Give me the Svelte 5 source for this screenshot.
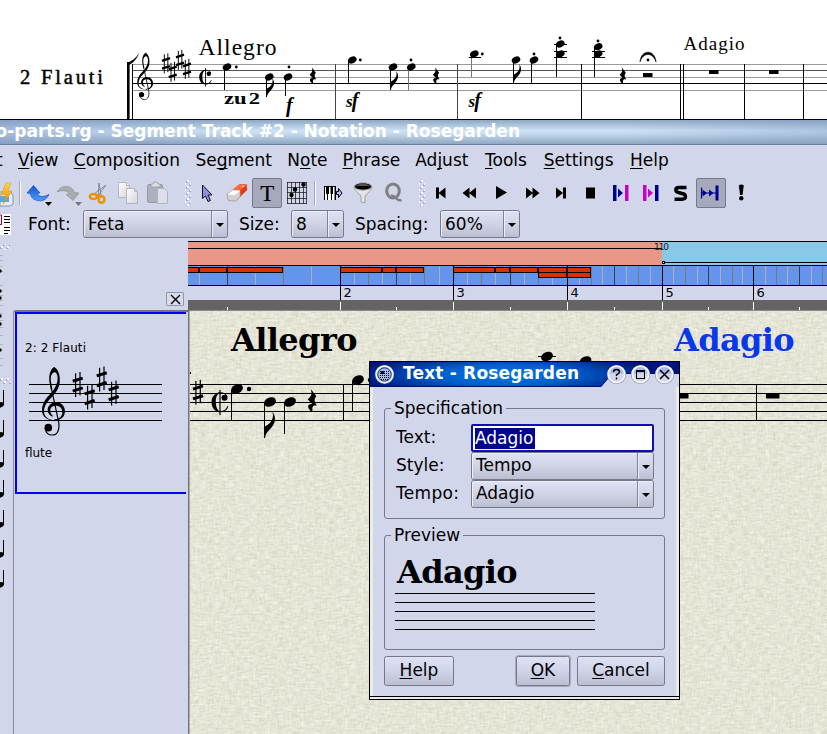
<script>
  const menus = [
    ['', 'V', 'iew', 40], ['', 'C', 'omposition', 106], ['Se', 'g', 'ment', 76],
    ['N', 'o', 'te', 39.5], ['', 'P', 'hrase', 57], ['Ad', 'j', 'ust', 54],
    ['', 'T', 'ools', 43], ['', 'S', 'ettings', 70.5], ['', 'H', 'elp', 40]
  ];
  const topLines = [[64.5, '#9a9a9a'], [70.5, '#555'], [77.5, '#9a9a9a'], [83.5, '#000'], [90.5, '#9a9a9a']];
  const staff = [384.5, 393.5, 402.5, 411.5, 420.5];
  const topSharps = [[166, 63.5], [172.7, 72], [180, 60], [187, 69]];
  const sharps = [[77.7, 384.7], [89.7, 397.3], [101.7, 379.3], [113.7, 393.3]];
  const topHeads = [
    [227, 67], [269.3, 77], [288, 77], [352.3, 60], [393, 67], [411.3, 67], [474.3, 54],
    [516, 60], [534, 60], [560.3, 44], [560.3, 54], [598.2, 46.7], [598.2, 54]
  ];
  const topDots = [
    [236.3, 67], [289, 67], [360.3, 60], [411, 60], [482.3, 54], [534, 54], [560, 38], [598, 41], [648, 60]
  ];
  const topStems = [
    [224.5, 68, 90], [266.5, 78, 97], [285.5, 78, 96], [348.5, 61, 83], [390.5, 68, 90], [408.5, 68, 90],
    [471.5, 55, 77], [513.5, 61, 83], [531.5, 61, 83], [556.5, 44, 77], [594.5, 47, 77]
  ];
  const topBars = [335.5, 457.5, 581.5, 680.5, 683.5, 744.5, 803.5];
  const ledgers = [[469, 481, 57.5], [554, 567, 44.5], [554, 567, 51.5], [554, 567, 57.5], [592, 605, 51.5], [592, 605, 57.5]];
  const ticks = [
    [199, 'l'], [227, 'd'], [255, 'l'], [283, 'm'], [311, 'l'], [354, 'l'], [368, 'm'], [382, 'l'], [396, 'd'],
    [410, 'l'], [424, 'm'], [439, 'l'], [467, 'l'], [481, 'm'], [495, 'l'], [510, 'd'], [524, 'l'], [538, 'm'],
    [552, 'l'], [579, 'l'], [591, 'm'], [602, 'l'], [614, 'd'], [626, 'l'], [638, 'm'], [650, 'l'], [673, 'l'],
    [685, 'm'], [697, 'l'], [708, 'd'], [720, 'l'], [732, 'm'], [742, 'l'], [765, 'l'], [776, 'm'], [787, 'l'],
    [799, 'd'], [811, 'l'], [822, 'm']
  ];
  const tone = { l: '#b0b0b4', m: '#787878', d: '#3c3c44' };
  const bars = [[340, 2], [453, 3], [567, 4], [662, 5], [753, 6]];
  const minor = [227, 396, 510, 614, 708, 799];
  const blocks = [
    [180, 199, 267], [199, 227, 267], [227, 283, 267], [340, 382, 267], [382, 396, 267], [396, 424, 267],
    [453, 495, 267], [495, 510, 267], [510, 538, 267], [538, 567, 267], [567, 591, 267],
    [538, 567, 272], [567, 591, 272]
  ];
  let text = $state('Adagio');
</script>

<svg width="0" height="0" class="defs">
  <defs>
    <g id="clef" transform="scale(.3333) translate(-160 -530)">
      <path d="M162 396 C174 400 182 422 179 444 C176 466 160 482 150 492 C138 504 132 516 132 530 C132 545 146 554 163 556 C144 558 126 546 126 526 C126 508 136 492 148 480 C160 468 173 450 173 430 C173 418 168 411 163 412 C155 414 151 425 153 440 L157 462 L153 464 C148 445 146 430 149 418 C152 405 157 399 162 396Z" />
      <path d="M163 557 C182 557 195 546 195 529 C195 514 184 502 168 502 C152 502 143 514 143 525 C143 535 150 542 158 545 L159 543 C152 538 151 532 151 526 C151 517 158 512 167 512 C178 512 187 518 187 531 C187 545 178 553 163 553Z" />
      <path d="M153 455 L176 560 C180 585 172 600 157 600 C146 600 138 592 136 582" fill="none" stroke="#000" stroke-width="3.5" />
      <circle cx="145" cy="578" r="11.5" />
    </g>
    <g id="sharp" fill="none" stroke="#000">
      <path d="M-2.1 -11.5V12.3M2.3 -12.7V10.8" stroke-width="1.2" />
      <path d="M-5 -3.4L5 -6.600M-5 6.4L5 3.2" stroke-width="3" />
    </g>
    <ellipse id="head" rx="6.2" ry="4.5" transform="rotate(-25)" />
    <path id="qrest" transform="scale(.3333)" d="M-4 -36 L13 -14 C6 -6 6 2 15 14 C6 12 -3 13 3 34 C-16 24 -16 6 1 9 L-13 -5 C-2 -14 1 -22 -4 -36Z" />
    <path id="flag" transform="scale(.3333)" d="M-1 0 V-34 C12 -40 31 -52 24 -79 C37 -60 32 -44 19 -29 C8 -17 3 -12 2 0Z" />
    <g id="cut">
      <path d="M7.500 4 C6 8 3 9.300 0 9 C-3 8.500 -4.200 4 -4.200 0 C-4.200 -5 -3 -8.500 0.500 -8.800 C3 -9 5.500 -8 6.500 -5.500 L7.500 -5.500 C6 -9 3 -10 0 -9.800 C-5 -9.300 -8.500 -5 -8.500 0 C-8.500 6 -5 10 0 10.200 C4.500 10 7.500 8 8.300 4Z" />
      <circle cx="4.5" cy="-4.3" r="3" />
      <path d="M0 -12V13" stroke="#000" stroke-width="1.2" />
    </g>
    <linearGradient id="gold" x2="0" y2="1"><stop stop-color="#ffd54a" /><stop offset="1" stop-color="#e58a00" /></linearGradient>
    <linearGradient id="blu" x2="0" y2="1"><stop stop-color="#1450c8" /><stop offset="1" stop-color="#4aa0ff" /></linearGradient>
    <linearGradient id="paper" x2="1" y2="1"><stop stop-color="#fff" /><stop offset="1" stop-color="#d4d4d8" /></linearGradient>
    <pattern id="grip" width="6" height="6" patternUnits="userSpaceOnUse">
      <path d="M0 1h2v2h-2zM3 4h2v2h-2z" fill="#a9aec6" /><path d="M1 0h2v2h-2zM4 3h2v2h-2z" fill="#f4f6ff" />
    </pattern>
  </defs>
</svg>

<div class="page">
  <svg class="score" width="827" height="120" viewBox="0 0 827 120">
    {#each topLines as [y, c]}<path d="M132 {y}H827" stroke={c} />{/each}
    <g font-family="'Liberation Serif', serif">
      <text x="20" y="84" font-size="20.500" stroke="#000" stroke-width=".45" textLength="83">2 Flauti</text>
      <text x="198.500" y="55" font-size="23.500" textLength="78">Allegro</text>
      <text x="683.500" y="50" font-size="19" textLength="61">Adagio</text>
      <text x="224" y="104" font-size="17" font-weight="bold" textLength="36" lengthAdjust="spacingAndGlyphs">zu<tspan dx="1.500">2</tspan></text>
      <g font-style="italic" font-weight="bold" font-size="20">
        <text x="286" y="112">f</text>
        <text x="346" y="107"><tspan font-size="17">s</tspan><tspan dx="-1">f</tspan></text>
        <text x="468.500" y="107"><tspan font-size="17">s</tspan><tspan dx="-1">f</tspan></text>
      </g>
    </g>
    <rect x="127" y="62" width="2.6" height="58" />
    <path d="M132.5 64V120" stroke="#000" />
    <path d="M127 63 C132 61 136 58 139 53 C137 59 133 63 129 65Z" />
    <use href="#clef" transform="translate(145 83.500) scale(.69)" />
    {#each topSharps as [x, y]}<use href="#sharp" transform="translate({x} {y}) scale(.8)" />{/each}
    <use href="#cut" transform="translate(205.500 77) scale(.74)" />
    {#each topBars as x}<path d="M{x} 64V120" stroke={x < 500 ? '#444' : '#000'} />{/each}
    {#each topStems as [x, a, b]}<path d="M{x} {a}V{b}" stroke={x === 408.5 || x === 471.5 ? '#777' : '#000'} />{/each}
    {#each topHeads as [x, y]}<use href="#head" transform="translate({x} {y}) scale(.72)" />{/each}
    {#each topDots as [x, y]}<circle cx={x} cy={y} r="1.4" />{/each}
    {#each ledgers as [a, b, y]}<path d="M{a} {y}H{b}" stroke="#000" />{/each}
    <use href="#flag" transform="translate(266.5 97) scale(.72)" />
    <use href="#flag" transform="translate(390.5 90) scale(.72)" />
    <use href="#flag" transform="translate(513.5 83) scale(.72)" />
    {#each [312.7, 436, 622.7] as x}<use href="#qrest" transform="translate({x} 76) scale(.72)" />{/each}
    <path d="M640 62 C641 49 655 49 656 62 C653 52 643 52 640 62Z" stroke="#000" stroke-width=".6" />
    <rect x="643" y="73" width="9.5" height="4" /><rect x="709" y="70" width="9.5" height="4" /><rect x="769" y="70" width="9.5" height="4" />
    <path d="M0 119.5H827" stroke="#000" />
  </svg>

  <div class="title"><span>o-parts.rg - Segment Track #2 - Notation - Rosegarden</span></div>

  <nav><span class="cutoff">t</span>
    {#each menus as [a, u, b, w]}<span class="menu" style="width:{w}px">{a}<u>{u}</u>{b}</span>{/each}
  </nav>

  <div class="tools">
    <svg width="26" height="32" viewBox="0 177 26 32">
      <path d="M0 192h11l2 4v8l-3 2H0z" fill="#e8ecf4" stroke="#8a93a8" /><path d="M0 196h9v6H0z" fill="#58a8e8" />
      <path d="M6 183h5l-3 8h4l-9 13 3-9H1z" fill="url(#gold)" stroke="#e09000" stroke-width=".5" />
      <path d="M19.500 181V205" stroke="#a0a4b8" /><path d="M20.500 181V205" stroke="#fff" />
    </svg>
    <svg width="28" height="32" viewBox="26 177 28 32">
      <path d="M27 193L33.500 185.500L40 193L37 193.500C39 197 43 197.500 49 194.500C46 200.500 41 201.500 38 200.500C34 200 31 198 30.500 193.500Z" fill="url(#blu)" stroke="#1a4cc0" stroke-width=".7" />
      <path d="M45 202h7l-3.500 4z" />
    </svg>
    <svg width="29" height="32" viewBox="54 177 29 32">
      <path d="M79 193L73 200.500L66 194.500L69.500 194C67 190 62 190 57 192C62 184 72 185 74.500 192.500Z" fill="#a9abb3" stroke="#8e9098" stroke-width=".7" />
      <path d="M75 202h7l-3.500 4z" fill="#777" />
    </svg>
    <svg width="30" height="32" viewBox="83 177 30 32">
      <path d="M99 183L101 195L98 197ZM106 185L97 197L94 194Z" fill="#d8dde8" stroke="#70788c" stroke-width=".8" />
      <ellipse cx="93.500" cy="196.500" rx="3.600" ry="2.500" fill="none" stroke="#e89400" stroke-width="2.500" />
      <ellipse cx="101.500" cy="199.500" rx="3" ry="3.300" fill="none" stroke="#e89400" stroke-width="2.500" />
      <path d="M96 195L101 196" stroke="#e89400" stroke-width="2.500" />
    </svg>
    <svg width="30" height="32" viewBox="113 177 30 32" stroke="#b4b6be" fill="url(#paper)">
      <path d="M118.500 182.500h8l3 3v12h-11z" /><path d="M126.500 188.500h8l3 3v12h-11z" /><path d="M126.500 182.500v3h3M134.500 188.500v3h3" />
    </svg>
    <svg width="29" height="32" viewBox="143 177 29 32">
      <rect x="147.500" y="184.500" width="15" height="18" rx="1.500" fill="#aeb1bd" stroke="#9699a8" />
      <path d="M151 187v-3h2l1-2h3l1 2h2v3z" fill="#ddd" stroke="#8e90a0" stroke-width=".7" />
      <path d="M157.500 188.500h7l3 3v12h-10z" fill="#dde0ec" stroke="#b0b3c2" />
    </svg>
    <svg width="20" height="32" viewBox="172 177 20 32"><rect x="185" y="180" width="6" height="26" fill="url(#grip)" /></svg>
    <svg width="30" height="32" viewBox="192 177 30 32">
      <path d="M202.500 185V198.500L205.500 196L208 201.500L210.500 200.500L208 195H212Z" fill="#8e90dc" stroke="#101030" />
    </svg>
    <svg width="30" height="32" viewBox="222 177 30 32">
      <path d="M227 194.500L239.500 184.500L246.500 184.500L247 190L235.500 201L228.500 200.500Z" fill="#e03c14" stroke="#c05030" stroke-width=".5" />
      <path d="M227 194.500L239.500 184.500L246.500 184.500L235 195Z" fill="#ff6a3c" />
      <path d="M227 194.500L232.500 190L240 190.500V196.500L235.500 201L228.500 200.500Z" fill="#d2d2d2" stroke="#a8a8a8" stroke-width=".6" />
      <path d="M227.300 194.500L232.500 190.300L240 190.700L235 195.200Z" fill="#fafafa" />
      <path d="M241.500 186L245 185.500L243 187.500Z" fill="#ffd8cc" />
    </svg>
    <svg width="30" height="32" viewBox="252 177 30 32">
      <rect x="252.500" y="178.500" width="29" height="29" rx="1.500" fill="#a6a9bc" stroke="#777988" />
      <text x="267.300" y="200.500" text-anchor="middle" font-family="'Liberation Serif', serif" font-size="23" stroke="#000" stroke-width=".2">T</text>
    </svg>
    <svg width="30" height="32" viewBox="282 177 30 32">
      <path d="M287.500 182V204M291.500 182V204M295.500 182V204M299.500 182V204M303.500 182V204M306.500 182V204M287 182.500H307M287 187.500H307M287 192.500H307M287 198.500H307M287 203.500H307" stroke="#222" stroke-width=".8" />
      <circle cx="303.500" cy="184.500" r="2.200" /><circle cx="295" cy="189.500" r="2.200" /><circle cx="291.500" cy="195" r="2.200" />
    </svg>
    <svg width="8" height="32" viewBox="312 177 8 32"><path d="M314.500 181V205" stroke="#a0a4b8" /><path d="M315.500 181V205" stroke="#fff" /></svg>
    <svg width="28" height="32" viewBox="320 177 28 32">
      <rect x="324" y="186" width="12" height="14" fill="#fff" />
      <path d="M324 186h12v1h-12zM324 186h1v14h-1zM326 186h3v8h-3zM330.500 186h2.500v8h-2.500zM334.500 186h1.500v14h-1.500zM327 194h1v6h-1zM331 194h1v6h-1z" />
      <path d="M336.500 191.500h2v-3l3.500 4.500l-3.500 4.500v-3h-2z" fill="#b4b8ff" stroke="#000" />
    </svg>
    <svg width="30" height="32" viewBox="348 177 30 32">
      <path d="M354 187C355 192 361 194 361 197V202L365 203V197C365 194 371 192 372 187Z" fill="#e4e4e4" stroke="#888" stroke-width=".7" />
      <ellipse cx="363" cy="186.500" rx="8.700" ry="3.700" fill="#000" stroke="#bbb" /><path d="M356 186C359 183 366 183 370 186Z" fill="#555" />
    </svg>
    <svg width="30" height="32" viewBox="378 177 30 32">
      <ellipse cx="393" cy="191" rx="6.300" ry="7" fill="none" stroke="#808080" stroke-width="3" /><path d="M391 195.500C396 195 396 202 401.500 200" fill="none" stroke="#808080" stroke-width="2.400" />
    </svg>
    <svg width="19" height="32" viewBox="408 177 19 32"><rect x="419" y="180" width="6" height="26" fill="url(#grip)" /></svg>
    <svg width="29" height="32" viewBox="427 177 29 32"><path d="M436 187.500h3v11h-3zM445.500 187.500v11l-7-5.500z" /></svg>
    <svg width="30" height="32" viewBox="456 177 30 32"><path d="M469.500 187.500v11l-7-5.500zM476 187.500v11l-7-5.500z" /></svg>
    <svg width="30" height="32" viewBox="486 177 30 32"><path d="M496 186l11 6.500l-11 6.500z" /></svg>
    <svg width="30" height="32" viewBox="516 177 30 32"><path d="M526 187.500v11l7-5.500zM532.500 187.500v11l7-5.500z" /></svg>
    <svg width="29" height="32" viewBox="546 177 29 32"><path d="M556 187.500v11l7-5.500zM563 187.500h3v11h-3z" /></svg>
    <svg width="30" height="32" viewBox="575 177 30 32"><path d="M586 187.500h9v11h-9z" /></svg>
    <svg width="31" height="32" viewBox="605 177 31 32"><path d="M613 185h3.500v16h-3.500zM618 188.500v9l5-4.500z" fill="#000090" /><path d="M625 185h3.500v16h-3.500z" fill="#c800c8" /></svg>
    <svg width="30" height="32" viewBox="636 177 30 32"><path d="M643 185h3.500v16h-3.500zM648 188.500v9l5-4.500z" fill="#c800c8" /><path d="M655 185h3.500v16h-3.500z" fill="#000090" /></svg>
    <svg width="30" height="32" viewBox="666 177 30 32"><path d="M686.500 187.500H679Q675.800 187.500 675.800 190Q675.800 192 678.500 192.500L682 193.500Q685.500 194 685.500 196.500Q685.500 199.200 682 199.200H674.500" fill="none" stroke="#000" stroke-width="3.400" /></svg>
    <svg width="30" height="32" viewBox="696 177 30 32">
      <rect x="696.500" y="178.500" width="29" height="29" rx="1.500" fill="#a6a9bc" stroke="#777988" />
      <path d="M701 193H716M701.500 187.500v11" stroke="#000090" stroke-width="1.200" /><path d="M702.500 189.500v7l4.500-3.500zM709 189.500v7l4.500-3.500zM715.500 185.500h3v15h-3z" fill="#000090" />
    </svg>
    <svg width="30" height="32" viewBox="726 177 30 32"><path d="M738.800 185.500Q741.300 183.500 743.800 185.500L742.500 195h-2.400z" /><circle cx="741.300" cy="198.300" r="2.200" /></svg>
  </div>

  <div class="tools2">
    <svg width="28" height="30" viewBox="0 210 28 30">
      <rect y="214" width="11" height="21" fill="#fff" /><path d="M0 215H1.500V224.500H0" fill="none" stroke="#a00028" />
      <path d="M4 216.500h6M4 219.500h6M4 222.500h6M4 227.500h6M4 230.500h6M4 233.500h4" stroke="#000" stroke-width="1.200" />
    </svg>
    <span style="width:55px">Font:</span><div class="combo" style="width:145px"><b>Feta</b><i></i></div>
    <span class="gap" style="width:52px">Size:</span><div class="combo" style="width:53px"><b>8</b><i></i></div>
    <span class="gap" style="width:85px">Spacing:</span><div class="combo" style="width:80px"><b>60%</b><i></i></div>
  </div>

  <div class="body">
    <svg class="strip" width="13" height="493" viewBox="0 241 13 493">
      <rect y="244" width="11" height="6" fill="url(#grip)" /><rect y="378" width="11" height="6" fill="url(#grip)" />
      {#each [255, 260, 266, 271, 285, 290, 295, 300, 305, 313, 320, 327, 335, 344, 350, 358, 365] as y}<path d="M0 {y}.5H3" stroke="#b4b4b0" />{/each}
      {#each [271, 291, 298, 316, 324, 350] as y}<circle cx="0" cy={y} r="1.700" />{/each}
      {#each [405, 435, 465, 495, 525, 555, 585] as y}<path d="M3.500 {y - 15}V{y}" stroke="#000" /><ellipse cx="0" cy={y} rx="4" ry="2.600" transform="rotate(-18 0 {y})" />{/each}
    </svg>
    <aside>
      <div class="top"><button aria-label="Close"><svg width="11" height="11" viewBox="0 0 11 11"><path d="M1 1L10 10M10 1L1 10" stroke="#000" stroke-width="1.400" /></svg></button></div>
      <div class="panel">
        <svg class="track" width="171" height="182" viewBox="15 312 171 182">
          <path d="M186 313H16V493H186" fill="none" stroke="#0000ff" stroke-width="2" />
          {#each staff as y}<path d="M29 {y}H162" stroke="#000" />{/each}
          <use href="#clef" transform="translate(53.300 411.700)" />
          {#each sharps as [x, y]}<use href="#sharp" transform="translate({x} {y})" />{/each}
          <g font-family="'DejaVu Sans', sans-serif" font-size="12"><text x="25" y="352" textLength="61">2: 2 Flauti</text><text x="25" y="457" textLength="27">flute</text></g>
        </svg>
      </div>
    </aside>
    <svg class="canvas" width="639" height="493" viewBox="188 241 639 493">
      <defs>
        <filter id="weft" x="0" y="0" width="1" height="1" color-interpolation-filters="sRGB">
          <feTurbulence type="fractalNoise" baseFrequency=".14 .5" numOctaves="2" seed="4" />
          <feColorMatrix values=".22 0 0 0 .79  .22 0 0 0 .787  .28 0 0 0 .7  0 0 0 0 1" />
        </filter>
        <filter id="warp" x="0" y="0" width="1" height="1" color-interpolation-filters="sRGB">
          <feTurbulence type="fractalNoise" baseFrequency=".5 .16" numOctaves="2" seed="9" />
          <feColorMatrix values=".22 0 0 0 .79  .22 0 0 0 .787  .28 0 0 0 .7  0 0 0 0 1" />
        </filter>
      </defs>
      <rect x="188" y="311" width="639" height="423" filter="url(#weft)" />
      <rect x="188" y="311" width="639" height="423" filter="url(#warp)" opacity=".4" />
      <rect x="188" y="241" width="474" height="25" fill="#e99888" /><rect x="662" y="241" width="165" height="25" fill="#89c8e6" />
      <path d="M188 241.500H827M188 248.500H662M664 262.500H827M188 265.500H827" stroke="#000" />
      <rect x="662.500" y="261.500" width="2" height="2" fill="#fff" stroke="#000" />
      <text x="661.500" y="250" text-anchor="middle" font-family="'DejaVu Sans', sans-serif" font-size="9" textLength="15" fill="#222">110</text>
      <rect x="188" y="266" width="639" height="19" fill="#6495ed" />
      {#each ticks as [x, t]}<path d="M{x}.5 266V285" stroke={tone[t]} />{/each}
      {#each blocks as [a, b, y]}<rect x={a + .5} y={y + .5} width={b - a - 1} height="5" fill="#d83000" stroke="#000" />{/each}
      <rect x="188" y="285" width="639" height="15" fill="#d2d6ea" /><rect x="188" y="300" width="639" height="10" fill="#646464" />
      <path d="M188 285.500H827" stroke="#000" />
      {#each bars as [x, n]}
        <path d="M{x}.5 266V300" stroke="#000" /><path d="M{x}.5 302V310" stroke="#fff" />
        <text x={x + 3.5} y="297" font-family="'DejaVu Sans', sans-serif" font-size="13">{n}</text>
      {/each}
      {#each minor as x}<path d="M{x}.5 307V310" stroke="#fff" />{/each}
      <path d="M188 310.500H827" stroke="#8c8a98" /><path d="M188.500 310V734" stroke="#737282" stroke-width="2" />
      {#each staff as y}<path d="M190 {y}H827" stroke="#000" />{/each}
      <g font-family="'DejaVu Serif', serif" font-weight="bold" font-size="32">
        <text x="231" y="351" textLength="126.500">Allegro</text><text x="674" y="351" textLength="120.500" fill="#0838ec">Adagio</text>
      </g>
      <rect x="190" y="372" width="1" height="2" />
      <use href="#sharp" transform="translate(198 392.500)" />
      <use href="#cut" transform="translate(220 402)" />
      <path d="M231.500 390V421M264.500 403V438M284.500 403V434M343.500 384V421M352.500 381V411M756.500 384V421" stroke="#000" />
      <use href="#head" transform="translate(237 389)" /><circle cx="249" cy="389" r="2.200" />
      <use href="#head" transform="translate(270 402)" /><use href="#flag" transform="translate(264.500 438)" />
      <use href="#head" transform="translate(290 402)" /><use href="#qrest" transform="translate(312 401)" />
      <use href="#head" transform="translate(358 380)" /><circle cx="370" cy="380" r="2.200" />
      <use href="#head" transform="translate(547 356.500)" /><path d="M538 356.500H556" stroke="#000" /><use href="#head" transform="translate(585.500 361)" />
      <rect x="675" y="393.500" width="13.500" height="5" /><rect x="766" y="393.500" width="13.500" height="5" />
    </svg>
  </div>

  <div class="dialog">
    <header>
      <svg width="309" height="25" viewBox="370 362 309 25">
        <defs>
          <radialGradient id="tb" gradientUnits="userSpaceOnUse" cx="0" cy="0" r="1" gradientTransform="translate(505 375) scale(150 22)"><stop stop-color="#0078e4" /><stop offset=".45" stop-color="#0060cc" /><stop offset="1" stop-color="#001480" /></radialGradient>
        </defs>
        <path d="M370 362H679V373.500H612L601 387H370Z" fill="url(#tb)" /><path d="M679 373.500H612L601 386.500H370" fill="none" stroke="#000e6c" />
        {#each [384.5, 616.5, 640.5, 664.5] as x, i}
          <circle cx={x} cy="374.500" r="9" fill={i ? '#d2d6ea' : '#9dbce8'} stroke="#858899" stroke-width="1.200" />
          {#if i}<path d="M{x - 7} 373.500A7 7 0 0 1 {x + 7} 373.500Z" fill="#a8b9e4" />{/if}
          <circle cx={x} cy="374.300" r="8.200" fill="none" stroke="#f4f4f8" stroke-width="1.800" />
          {#if !i}<circle cx={x} cy="374.500" r="6.700" fill="none" stroke="#16388c" />{/if}
        {/each}
        <path d="M380 371.500h9M380 373.500h9M380 375.500h9M380 377.500h9M381 379.500h7" stroke="#000" stroke-dasharray="1 1" /><circle cx="382.500" cy="372.500" r="1.800" />
        <path d="M613.500 372Q613.500 369.500 616.500 369.500Q619.500 369.500 619.500 372Q619.500 373.500 616.500 374.800V376M616.500 377.500V379.500" fill="none" stroke="#000" stroke-width="1.400" />
        <rect x="636.500" y="370.500" width="8" height="8" fill="none" stroke="#000" /><path d="M636 371H645" stroke="#000" stroke-width="2" />
        <path d="M660 370L669 379M669 370L660 379" stroke="#000" stroke-width="1.500" />
        <text x="403" y="379" fill="#fff" font-family="'DejaVu Sans', sans-serif" font-weight="bold" font-size="17" textLength="176">Text - Rosegarden</text>
      </svg>
    </header>
    <div class="content">
      <fieldset class="spec">
        <legend>Specification</legend>
        <div class="row"><label for="t">Text:</label><div class="input" id="t"><mark>{text}</mark></div></div>
        <div class="row"><span class="lab">Style:</span><div class="combo"><b>Tempo</b><i></i></div></div>
        <div class="row"><span class="lab wide">Tempo:</span><div class="combo"><b>{text}</b><i></i></div></div>
      </fieldset>
      <fieldset class="prev">
        <legend>Preview</legend>
        <svg width="202" height="84" viewBox="395 555 202 84">
          <text x="397" y="583" font-family="'DejaVu Serif', serif" font-weight="bold" font-size="32" textLength="120.500">{text}</text>
          {#each [593.5, 602.5, 611.5, 620.5, 629.5] as y}<path d="M395 {y}H595" stroke="#000" />{/each}
        </svg>
      </fieldset>
      <div class="buttons"><button style="width:70px"><u>H</u>elp</button><button class="ok" style="width:54px"><u>O</u>K</button><button style="width:88px"><u>C</u>ancel</button></div>
    </div>
  </div>
</div>

<style>
  :global(body) { margin: 0; overflow: hidden; background: #fff; }
  svg { display: block; flex: none; }
  .defs { position: absolute; }
  .page { position: relative; width: 827px; height: 734px; overflow: hidden; background: #d2d6ea; color: #000; font: 17px/20px 'DejaVu Sans', sans-serif; display: flex; flex-direction: column; }
  .score { background: #fff; }
  .title { height: 25px; flex: none; box-sizing: border-box; border-bottom: 1px solid #6e7f9c; background: linear-gradient(90deg, #8098c480, #b8d0f000 30%, #b8d0f000 75%, #8098c060), linear-gradient(#8fa9c4, #cde2f5 45%, #c4d9ee 58%, #8fa7c0); color: #fff; font-weight: bold; line-height: 22px; }
  .title span { display: flex; justify-content: flex-end; width: 520px; white-space: nowrap; }
  nav { height: 32px; flex: none; display: flex; align-items: center; box-sizing: border-box; padding-bottom: 2px; }
  .cutoff { width: 18px; flex: none; text-indent: -4px; }
  .menu { flex: none; white-space: nowrap; margin-right: 15.75px; }
  u { text-decoration: underline; text-decoration-thickness: 1px; text-underline-offset: 2px; text-decoration-skip-ink: none; }
  .tools { display: flex; height: 33px; flex: none; }
  .tools2 { display: flex; height: 31px; flex: none; }
  .tools2 span { line-height: 29px; white-space: nowrap; }
  .tools2 .gap { margin-left: 11px; }
  .combo { height: 28px; box-sizing: border-box; border: 1px solid #757888; border-radius: 2.5px; background: linear-gradient(#dfe2f4, #d0d3e6 50%, #bcbfd0); display: flex; box-shadow: inset 1px 1px #eceefa; }
  .combo b { font-weight: normal; flex: 1; padding-left: 4px; line-height: 25px; }
  .tools2 .combo b { line-height: 27px; }
  .combo i { width: 15px; border-left: 1px solid #808393; box-shadow: inset 1px 0 #eceefa; display: flex; align-items: center; justify-content: center; }
  .combo i::after { content: ''; border: 4px solid transparent; border-top-color: #000; border-bottom: 0; margin-top: 1px; }
  .body { display: flex; height: 493px; flex: none; }
  aside { width: 175px; display: flex; flex-direction: column; }
  .top { height: 69px; display: flex; justify-content: flex-end; align-items: flex-end; padding-right: 4px; box-sizing: border-box; padding-bottom: 4px; }
  .top button { width: 18px; height: 14px; box-sizing: border-box; padding: 0; display: flex; justify-content: center; align-items: center; background: #d8dbec; border: 1px solid #9497a8; border-radius: 1px; }
  .panel { flex: 1; border: solid #737282; border-width: 2px 0 0 1px; border-left-color: #8c8e9e; padding-left: 1px; border-top-left-radius: 3px; }
  .dialog { position: absolute; left: 369px; top: 361px; width: 311px; height: 339px; box-sizing: border-box; border: 1px solid #000; background: #ecebea; }
  header { background: #d2d6ea; }
  .content { height: 310px; margin: 0 3px; background: #d2d6ea; padding: 11px 11px 0; box-sizing: border-box; position: relative; }
  .content::after { content: ''; position: absolute; left: -3px; right: -3px; bottom: 0; border-bottom: 1px solid #000; }
  fieldset { margin: 0; border: 1px solid #777988; border-radius: 3px; padding: 0; min-width: 0; box-sizing: border-box; width: 281px; }
  legend { margin-left: 6px; padding: 0 3px; height: 20px; line-height: 20px; }
  .spec { height: 121px; }
  .prev { height: 125px; margin-top: 6px; }
  .prev svg { margin: 10px 0 0 10px; }
  .spec .row { display: flex; padding-left: 11px; height: 28px; }
  .spec legend + .row { margin-top: 6px; }
  label, .lab { width: 75px; line-height: 27px; }
  .wide { letter-spacing: .3px; }
  .row .combo { width: 183px; }
  .input { width: 183px; height: 28px; box-sizing: border-box; border: 2px solid #1010b0; border-radius: 2px; background: #fff; padding: 2px 2px; }
  mark { display: inline-block; background: #00058c; color: #fff; line-height: 20px; height: 21px; padding-right: 1.5px; }
  .buttons { display: flex; margin-top: 6px; }
  .buttons button { height: 30px; box-sizing: border-box; padding: 0 0 3px; border: 1px solid #757888; border-radius: 2.5px; background: linear-gradient(#dfe2f4, #d0d4e8 50%, #bcbfd0); font: 17px 'DejaVu Sans', sans-serif; color: #000; }
  .buttons .ok { margin: 0 7px 0 auto; box-shadow: 0 0 0 1px #a8abba; }
</style>
